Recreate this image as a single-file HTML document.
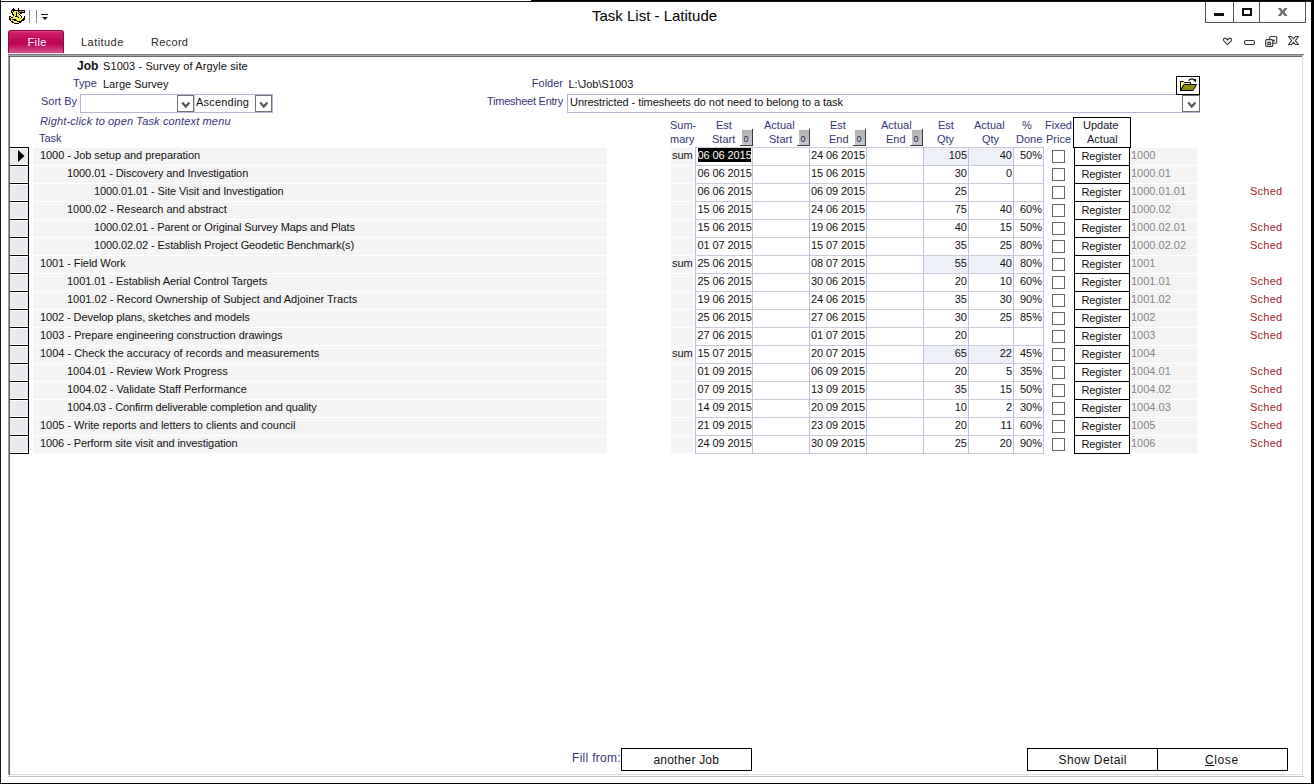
<!DOCTYPE html>
<html><head><meta charset="utf-8"><title>Task List - Latitude</title>
<style>
html,body{margin:0;padding:0;background:#fff;width:1314px;height:784px;overflow:hidden;position:relative}
body *{position:absolute}
body svg *{position:static}
.t,.tb,.ti,.t11,.t12,.t15,.t8{font-family:"Liberation Sans",sans-serif;white-space:nowrap;color:#111}
.t{font-size:11px;line-height:11px}
.tb{font-size:11px;line-height:11px;font-weight:bold}
.ti{font-size:11px;line-height:11px;font-style:italic}
.t11{font-size:11px;line-height:11px}
.t12{font-size:12px;line-height:12px}
.t15{font-size:15px;line-height:15px;color:#000}
.t8{font-size:9px;line-height:9px;color:#24245a}
.c{text-align:center}
u{position:static}
</style></head><body>
<div style="left:531px;top:0px;width:783px;height:1px;background:#000"></div>
<div style="left:0px;top:1px;width:1314px;height:1px;background:#111"></div>
<div style="left:0px;top:0px;width:1px;height:784px;background:#1a1a1a"></div>
<div style="left:1311px;top:0px;width:3px;height:784px;background:#000"></div>
<div style="left:0px;top:783px;width:1314px;height:1px;background:#000"></div>
<svg style="left:9px;top:8px" width="16" height="16" viewBox="0 0 16 16" shape-rendering="crispEdges"><rect x="4" y="0" width="1" height="1" fill="#000"/><rect x="9" y="0" width="1" height="1" fill="#000"/><rect x="3" y="1" width="1" height="1" fill="#000"/><rect x="4" y="1" width="1" height="1" fill="#000"/><rect x="5" y="1" width="1" height="1" fill="#000"/><rect x="8" y="1" width="1" height="1" fill="#eeee50"/><rect x="9" y="1" width="1" height="1" fill="#000"/><rect x="2" y="2" width="1" height="1" fill="#000"/><rect x="3" y="2" width="1" height="1" fill="#000"/><rect x="4" y="2" width="1" height="1" fill="#000"/><rect x="5" y="2" width="1" height="1" fill="#000"/><rect x="6" y="2" width="1" height="1" fill="#000"/><rect x="7" y="2" width="1" height="1" fill="#000"/><rect x="8" y="2" width="1" height="1" fill="#000"/><rect x="9" y="2" width="1" height="1" fill="#000"/><rect x="10" y="2" width="1" height="1" fill="#000"/><rect x="11" y="2" width="1" height="1" fill="#000"/><rect x="12" y="2" width="1" height="1" fill="#000"/><rect x="13" y="2" width="1" height="1" fill="#000"/><rect x="14" y="2" width="1" height="1" fill="#000"/><rect x="15" y="2" width="1" height="1" fill="#000"/><rect x="2" y="3" width="1" height="1" fill="#000"/><rect x="4" y="3" width="1" height="1" fill="#000"/><rect x="6" y="3" width="1" height="1" fill="#eeee50"/><rect x="7" y="3" width="1" height="1" fill="#eeee50"/><rect x="8" y="3" width="1" height="1" fill="#eeee50"/><rect x="9" y="3" width="1" height="1" fill="#000"/><rect x="10" y="3" width="1" height="1" fill="#a0a080"/><rect x="11" y="3" width="1" height="1" fill="#a0a080"/><rect x="12" y="3" width="1" height="1" fill="#a0a080"/><rect x="13" y="3" width="1" height="1" fill="#a0a080"/><rect x="14" y="3" width="1" height="1" fill="#a0a080"/><rect x="15" y="3" width="1" height="1" fill="#000"/><rect x="2" y="4" width="1" height="1" fill="#000"/><rect x="3" y="4" width="1" height="1" fill="#000"/><rect x="4" y="4" width="1" height="1" fill="#eeee50"/><rect x="5" y="4" width="1" height="1" fill="#eeee50"/><rect x="6" y="4" width="1" height="1" fill="#eeee50"/><rect x="7" y="4" width="1" height="1" fill="#000"/><rect x="8" y="4" width="1" height="1" fill="#eeee50"/><rect x="9" y="4" width="1" height="1" fill="#eeee50"/><rect x="10" y="4" width="1" height="1" fill="#000"/><rect x="11" y="4" width="1" height="1" fill="#000"/><rect x="12" y="4" width="1" height="1" fill="#000"/><rect x="13" y="4" width="1" height="1" fill="#000"/><rect x="14" y="4" width="1" height="1" fill="#000"/><rect x="15" y="4" width="1" height="1" fill="#000"/><rect x="3" y="5" width="1" height="1" fill="#000"/><rect x="4" y="5" width="1" height="1" fill="#eeee50"/><rect x="5" y="5" width="1" height="1" fill="#eeee50"/><rect x="6" y="5" width="1" height="1" fill="#eeee50"/><rect x="7" y="5" width="1" height="1" fill="#000"/><rect x="8" y="5" width="1" height="1" fill="#eeee50"/><rect x="9" y="5" width="1" height="1" fill="#000"/><rect x="10" y="5" width="1" height="1" fill="#eeee50"/><rect x="11" y="5" width="1" height="1" fill="#000"/><rect x="12" y="5" width="1" height="1" fill="#000"/><rect x="3" y="6" width="1" height="1" fill="#000"/><rect x="4" y="6" width="1" height="1" fill="#000"/><rect x="5" y="6" width="1" height="1" fill="#eeee50"/><rect x="6" y="6" width="1" height="1" fill="#eeee50"/><rect x="7" y="6" width="1" height="1" fill="#000"/><rect x="8" y="6" width="1" height="1" fill="#eeee50"/><rect x="9" y="6" width="1" height="1" fill="#eeee50"/><rect x="10" y="6" width="1" height="1" fill="#000"/><rect x="11" y="6" width="1" height="1" fill="#eeee50"/><rect x="4" y="7" width="1" height="1" fill="#000"/><rect x="5" y="7" width="1" height="1" fill="#eeee50"/><rect x="6" y="7" width="1" height="1" fill="#eeee50"/><rect x="7" y="7" width="1" height="1" fill="#000"/><rect x="8" y="7" width="1" height="1" fill="#eeee50"/><rect x="9" y="7" width="1" height="1" fill="#eeee50"/><rect x="10" y="7" width="1" height="1" fill="#eeee50"/><rect x="11" y="7" width="1" height="1" fill="#000"/><rect x="0" y="8" width="1" height="1" fill="#000"/><rect x="1" y="8" width="1" height="1" fill="#000"/><rect x="4" y="8" width="1" height="1" fill="#eeee50"/><rect x="5" y="8" width="1" height="1" fill="#eeee50"/><rect x="6" y="8" width="1" height="1" fill="#000"/><rect x="7" y="8" width="1" height="1" fill="#000"/><rect x="8" y="8" width="1" height="1" fill="#000"/><rect x="9" y="8" width="1" height="1" fill="#eeee50"/><rect x="10" y="8" width="1" height="1" fill="#eeee50"/><rect x="11" y="8" width="1" height="1" fill="#eeee50"/><rect x="12" y="8" width="1" height="1" fill="#000"/><rect x="15" y="8" width="1" height="1" fill="#000"/><rect x="0" y="9" width="1" height="1" fill="#000"/><rect x="2" y="9" width="1" height="1" fill="#000"/><rect x="3" y="9" width="1" height="1" fill="#000"/><rect x="4" y="9" width="1" height="1" fill="#eeee50"/><rect x="5" y="9" width="1" height="1" fill="#eeee50"/><rect x="6" y="9" width="1" height="1" fill="#eeee50"/><rect x="7" y="9" width="1" height="1" fill="#eeee50"/><rect x="8" y="9" width="1" height="1" fill="#eeee50"/><rect x="9" y="9" width="1" height="1" fill="#000"/><rect x="10" y="9" width="1" height="1" fill="#eeee50"/><rect x="11" y="9" width="1" height="1" fill="#eeee50"/><rect x="12" y="9" width="1" height="1" fill="#000"/><rect x="15" y="9" width="1" height="1" fill="#000"/><rect x="0" y="10" width="1" height="1" fill="#000"/><rect x="1" y="10" width="1" height="1" fill="#000"/><rect x="2" y="10" width="1" height="1" fill="#eeee50"/><rect x="3" y="10" width="1" height="1" fill="#eeee50"/><rect x="4" y="10" width="1" height="1" fill="#eeee50"/><rect x="5" y="10" width="1" height="1" fill="#eeee50"/><rect x="6" y="10" width="1" height="1" fill="#eeee50"/><rect x="7" y="10" width="1" height="1" fill="#eeee50"/><rect x="8" y="10" width="1" height="1" fill="#eeee50"/><rect x="9" y="10" width="1" height="1" fill="#eeee50"/><rect x="10" y="10" width="1" height="1" fill="#eeee50"/><rect x="11" y="10" width="1" height="1" fill="#eeee50"/><rect x="12" y="10" width="1" height="1" fill="#eeee50"/><rect x="13" y="10" width="1" height="1" fill="#eeee50"/><rect x="14" y="10" width="1" height="1" fill="#000"/><rect x="15" y="10" width="1" height="1" fill="#000"/><rect x="0" y="11" width="1" height="1" fill="#000"/><rect x="1" y="11" width="1" height="1" fill="#000"/><rect x="2" y="11" width="1" height="1" fill="#eeee50"/><rect x="3" y="11" width="1" height="1" fill="#000"/><rect x="4" y="11" width="1" height="1" fill="#000"/><rect x="5" y="11" width="1" height="1" fill="#000"/><rect x="6" y="11" width="1" height="1" fill="#000"/><rect x="7" y="11" width="1" height="1" fill="#eeee50"/><rect x="8" y="11" width="1" height="1" fill="#eeee50"/><rect x="9" y="11" width="1" height="1" fill="#eeee50"/><rect x="10" y="11" width="1" height="1" fill="#eeee50"/><rect x="11" y="11" width="1" height="1" fill="#eeee50"/><rect x="12" y="11" width="1" height="1" fill="#eeee50"/><rect x="13" y="11" width="1" height="1" fill="#000"/><rect x="14" y="11" width="1" height="1" fill="#000"/><rect x="15" y="11" width="1" height="1" fill="#000"/><rect x="1" y="12" width="1" height="1" fill="#000"/><rect x="2" y="12" width="1" height="1" fill="#eeee50"/><rect x="3" y="12" width="1" height="1" fill="#eeee50"/><rect x="4" y="12" width="1" height="1" fill="#eeee50"/><rect x="5" y="12" width="1" height="1" fill="#000"/><rect x="6" y="12" width="1" height="1" fill="#000"/><rect x="7" y="12" width="1" height="1" fill="#000"/><rect x="8" y="12" width="1" height="1" fill="#eeee50"/><rect x="9" y="12" width="1" height="1" fill="#eeee50"/><rect x="10" y="12" width="1" height="1" fill="#eeee50"/><rect x="11" y="12" width="1" height="1" fill="#eeee50"/><rect x="12" y="12" width="1" height="1" fill="#000"/><rect x="13" y="12" width="1" height="1" fill="#000"/><rect x="14" y="12" width="1" height="1" fill="#000"/><rect x="2" y="13" width="1" height="1" fill="#000"/><rect x="3" y="13" width="1" height="1" fill="#000"/><rect x="4" y="13" width="1" height="1" fill="#eeee50"/><rect x="5" y="13" width="1" height="1" fill="#eeee50"/><rect x="6" y="13" width="1" height="1" fill="#eeee50"/><rect x="7" y="13" width="1" height="1" fill="#eeee50"/><rect x="8" y="13" width="1" height="1" fill="#000"/><rect x="9" y="13" width="1" height="1" fill="#000"/><rect x="10" y="13" width="1" height="1" fill="#000"/><rect x="11" y="13" width="1" height="1" fill="#000"/><rect x="12" y="13" width="1" height="1" fill="#000"/><rect x="3" y="14" width="1" height="1" fill="#000"/><rect x="4" y="14" width="1" height="1" fill="#000"/><rect x="5" y="14" width="1" height="1" fill="#eeee50"/><rect x="6" y="14" width="1" height="1" fill="#eeee50"/><rect x="7" y="14" width="1" height="1" fill="#eeee50"/><rect x="8" y="14" width="1" height="1" fill="#eeee50"/><rect x="9" y="14" width="1" height="1" fill="#eeee50"/><rect x="10" y="14" width="1" height="1" fill="#000"/><rect x="11" y="14" width="1" height="1" fill="#000"/><rect x="5" y="15" width="1" height="1" fill="#000"/><rect x="6" y="15" width="1" height="1" fill="#000"/><rect x="7" y="15" width="1" height="1" fill="#000"/><rect x="8" y="15" width="1" height="1" fill="#000"/><rect x="9" y="15" width="1" height="1" fill="#000"/></svg>
<div style="left:29px;top:10px;width:1px;height:13px;background:#8c8c8c"></div>
<div style="left:36px;top:10px;width:1px;height:13px;background:#8c8c8c"></div>
<div style="left:41px;top:14px;width:7px;height:1px;background:#111"></div>
<svg style="left:42px;top:17px" width="6" height="3" viewBox="0 0 6 3"><path d="M0 0h6L3 3z" fill="#111"/></svg>
<span class="t15" style="left:592px;top:8px;">Task List - Latitude</span>
<div style="left:1205px;top:2px;width:101px;height:21px;border:1px solid #555;border-top:0;box-sizing:border-box"></div>
<div style="left:1233px;top:2px;width:1px;height:21px;background:#555"></div>
<div style="left:1259px;top:2px;width:1px;height:21px;background:#555"></div>
<div style="left:1214px;top:13px;width:10px;height:3px;background:#111"></div>
<div style="left:1242px;top:8px;width:10px;height:8px;border:2px solid #111;box-sizing:border-box"></div>
<svg style="left:1274px;top:4px" width="18" height="16" viewBox="1274 4 18 16"><path d="M1277.8 8H1281L1282.7 10.6L1284.4 8H1287.6L1284.5 12L1287.6 16H1284.4L1282.7 13.4L1281 16H1277.8L1280.9 12Z" fill="#6e6e6e"/></svg>
<div style="left:8px;top:30px;width:56px;height:23px;box-sizing:border-box;border:1px solid #8a0a40;border-bottom:0;border-radius:3px 3px 0 0;background:linear-gradient(#e04282 0px,#d01c66 2px,#c0085a 9px,#bc0658 13px,#d03a78 19px,#e0508c 22px)"></div>
<div style="left:8px;top:53px;width:56px;height:1px;background:#fbe2f0"></div>
<span class="t11" style="left:27.5px;top:37px;color:#fff;letter-spacing:0.4px">File</span>
<span class="t11" style="left:81px;top:37px;color:#2a2a2a;letter-spacing:0.45px">Latitude</span>
<span class="t11" style="left:151px;top:37px;color:#2a2a2a;letter-spacing:0.3px">Record</span>
<svg style="left:1220px;top:33px" width="82" height="16" viewBox="1220 33 82 16" fill="none" stroke="#383838" stroke-width="1.1" stroke-linejoin="round">
<path d="M1227.5 44.6L1223.8 40.8Q1222.9 39.6 1223.8 38.6Q1224.9 37.6 1226 38.5L1227.5 40L1229 38.5Q1230.1 37.6 1231.2 38.6Q1232.1 39.6 1231.2 40.8Z"/>
<rect x="1244.5" y="40.5" width="10" height="4" rx="1.5"/>
<rect x="1269.7" y="36.5" width="7" height="6.8" rx="1"/>
<rect x="1265.7" y="39.6" width="7" height="6.8" rx="1" fill="#fff"/>
<rect x="1267.8" y="42.4" width="2.8" height="2" fill="none"/>
<rect x="1273.3" y="40" width="1.2" height="1.2" fill="none" stroke-width="0.9"/>
<path d="M1288.5 36.5H1291.5L1293.5 38.8L1295.5 36.5H1298.5L1295.4 40.6L1298.5 44.5H1295.5L1293.5 42.3L1291.5 44.5H1288.5L1291.6 40.6Z"/>
</svg>
<div style="left:8px;top:54px;width:1296px;height:1px;background:#808080"></div>
<div style="left:8px;top:55px;width:1295px;height:1px;background:#a4a4a4"></div>
<div style="left:8px;top:56px;width:1294px;height:1px;background:#6a6a6a"></div>
<div style="left:8px;top:57px;width:1px;height:718px;background:#9c9c9c"></div>
<div style="left:9px;top:57px;width:1px;height:718px;background:#626262"></div>
<div style="left:1302px;top:57px;width:1px;height:718px;background:#d8d8d8"></div>
<div style="left:10px;top:774px;width:1292px;height:1px;background:#dedede"></div>
<div style="left:8px;top:776px;width:1296px;height:1px;background:#c8c8c8"></div>
<span class="tb" style="left:77px;top:60px;font-size:12px;line-height:12px">Job</span>
<span class="t" style="left:103px;top:61px;letter-spacing:0.1px">S1003 - Survey of Argyle site</span>
<span class="t" style="left:73px;top:78px;color:#363676;">Type</span>
<span class="t" style="left:103px;top:79px;">Large Survey</span>
<span class="t" style="left:41px;top:96px;color:#363676;">Sort By</span>
<div style="left:80px;top:94px;width:193px;height:19px;border:1px solid #b4b4d8;box-sizing:border-box;background:#fff"></div>
<div style="left:177px;top:95px;width:17px;height:17px;border:1px solid #707070;box-sizing:border-box;background:#fff"></div>
<div style="left:255px;top:95px;width:17px;height:17px;border:1px solid #707070;box-sizing:border-box;background:#fff"></div>
<div style="left:194px;top:94px;width:1px;height:19px;background:#c8c8e0"></div>
<span class="t" style="left:196px;top:97px;letter-spacing:0.2px">Ascending</span>
<svg style="left:181px;top:101px" width="10" height="8" viewBox="0 0 10 8"><path d="M1.2 1.6L4.8 5.6L8.4 1.6" stroke="#555" stroke-width="2.2" fill="none"/></svg>
<svg style="left:259px;top:101px" width="10" height="8" viewBox="0 0 10 8"><path d="M1.2 1.6L4.8 5.6L8.4 1.6" stroke="#555" stroke-width="2.2" fill="none"/></svg>
<span class="ti" style="left:40px;top:116px;color:#363676;letter-spacing:0.14px">Right-click to open Task context menu</span>
<span class="t" style="left:39px;top:133px;color:#363676;">Task</span>
<span class="t r" style="right:751px;top:78px;color:#363676;">Folder</span>
<span class="t" style="left:568.5px;top:79px;">L:\Job\S1003</span>
<span class="t r" style="right:751px;top:96px;color:#363676;letter-spacing:-0.25px">Timesheet Entry</span>
<div style="left:567px;top:94px;width:633px;height:19px;border:1px solid #b4b4d8;box-sizing:border-box;background:#fff"></div>
<span class="t" style="left:570px;top:97px;letter-spacing:-0.06px">Unrestricted - timesheets do not need to belong to a task</span>
<div style="left:1182px;top:95px;width:18px;height:17px;border:1px solid #707070;box-sizing:border-box;background:#fff"></div>
<svg style="left:1187px;top:101px" width="10" height="8" viewBox="0 0 10 8"><path d="M1.2 1.6L4.8 5.6L8.4 1.6" stroke="#555" stroke-width="2.2" fill="none"/></svg>
<div style="left:1176px;top:76px;width:24px;height:19px;border:1px solid #000;border-width:1.5px;box-sizing:border-box;background:#fff"></div>
<svg style="left:1176px;top:75px" width="24" height="19" viewBox="0 0 24 19">
<path d="M4.5 15.5V6.5H7.5L8.5 7.5H14.5V9.5H8L4.5 15.5Z" fill="#f0f078" stroke="#000" stroke-width="1"/>
<path d="M4.5 15.5L8 9.5H20.5L17 15.5Z" fill="#8c8c0a" stroke="#000" stroke-width="1"/>
<path d="M12.5 5.6Q15.5 2.4 18.6 5" stroke="#000" fill="none" stroke-width="1.1"/>
<path d="M17 4.6L20.3 4L19.6 7.4Z" fill="#000"/>
</svg>
<span class="t" style="left:670px;top:120px;color:#363676;">Sum-</span>
<span class="t" style="left:670px;top:134px;color:#363676;">mary</span>
<span class="t" style="left:716px;top:120px;color:#363676;">Est</span>
<span class="t" style="left:712px;top:134px;color:#363676;">Start</span>
<span class="t" style="left:764px;top:120px;color:#363676;">Actual</span>
<span class="t" style="left:769px;top:134px;color:#363676;">Start</span>
<span class="t" style="left:830px;top:120px;color:#363676;">Est</span>
<span class="t" style="left:829px;top:134px;color:#363676;">End</span>
<span class="t" style="left:881px;top:120px;color:#363676;">Actual</span>
<span class="t" style="left:886px;top:134px;color:#363676;">End</span>
<span class="t" style="left:938px;top:120px;color:#363676;">Est</span>
<span class="t" style="left:937px;top:134px;color:#363676;">Qty</span>
<span class="t" style="left:974px;top:120px;color:#363676;">Actual</span>
<span class="t" style="left:982px;top:134px;color:#363676;">Qty</span>
<span class="t" style="left:1022px;top:120px;color:#363676;">%</span>
<span class="t" style="left:1016px;top:134px;color:#363676;">Done</span>
<span class="t" style="left:1045px;top:120px;color:#363676;">Fixed</span>
<span class="t" style="left:1046px;top:134px;color:#363676;">Price</span>
<div style="left:740px;top:129px;width:13px;height:17px;background:#3c3c3c"></div>
<div style="left:740px;top:129px;width:12px;height:16px;background:#fff"></div>
<div style="left:742px;top:130px;width:10px;height:15px;background:linear-gradient(#b4b4b8,#c6c6ca)"></div>
<span class="t8" style="left:743.5px;top:134.5px;">0</span>
<div style="left:797px;top:129px;width:13px;height:17px;background:#3c3c3c"></div>
<div style="left:797px;top:129px;width:12px;height:16px;background:#fff"></div>
<div style="left:799px;top:130px;width:10px;height:15px;background:linear-gradient(#b4b4b8,#c6c6ca)"></div>
<span class="t8" style="left:800.5px;top:134.5px;">0</span>
<div style="left:853px;top:129px;width:13px;height:17px;background:#3c3c3c"></div>
<div style="left:853px;top:129px;width:12px;height:16px;background:#fff"></div>
<div style="left:855px;top:130px;width:10px;height:15px;background:linear-gradient(#b4b4b8,#c6c6ca)"></div>
<span class="t8" style="left:856.5px;top:134.5px;">0</span>
<div style="left:910px;top:129px;width:13px;height:17px;background:#3c3c3c"></div>
<div style="left:910px;top:129px;width:12px;height:16px;background:#fff"></div>
<div style="left:912px;top:130px;width:10px;height:15px;background:linear-gradient(#b4b4b8,#c6c6ca)"></div>
<span class="t8" style="left:913.5px;top:134.5px;">0</span>
<div style="left:1073px;top:117px;width:58px;height:31px;border:1px solid #000;box-sizing:border-box;background:#fff"></div>
<span class="t" style="left:1083px;top:120px;color:#161628">Update</span>
<span class="t" style="left:1087px;top:134px;color:#161628">Actual</span>
<div style="left:10px;top:147px;width:19px;height:19px;border:1px solid #000;border-left:0;box-sizing:border-box;background:#e8eaee;box-shadow:inset 0 1px #fff,inset 0 -1px #fff"></div>
<div style="left:33px;top:148px;width:574px;height:17px;background:#f4f4f4"></div>
<span class="t" style="left:40px;top:150px;letter-spacing:-0.061px">1000 - Job setup and preparation</span>
<div style="left:671px;top:148px;width:22px;height:17px;background:#f4f4f4"></div>
<span class="t" style="left:672px;top:150px;">sum</span>
<div style="left:924px;top:148px;width:44px;height:17px;background:#edf0f6"></div>
<div style="left:969px;top:148px;width:44px;height:17px;background:#edf0f6"></div>
<div style="left:698px;top:148px;width:53px;height:14px;background:#000"></div>
<span class="t" style="left:697.6px;top:150px;color:#fff;letter-spacing:-0.1px">06 06 2015</span>
<span class="t" style="left:811px;top:150px;letter-spacing:-0.1px">24 06 2015</span>
<span class="t r" style="right:347px;top:150px;">105</span>
<span class="t r" style="right:302px;top:150px;">40</span>
<span class="t r" style="right:272px;top:150px;">50%</span>
<div style="left:1052px;top:150px;width:13px;height:13px;border:1px solid #666;box-sizing:border-box;background:#fff"></div>
<div style="left:1074px;top:147px;width:56px;height:19px;border:1px solid #000;box-sizing:border-box;background:#fff"></div>
<span class="t" style="left:1081.5px;top:151px;letter-spacing:-0.12px">Register</span>
<div style="left:1130px;top:148px;width:67px;height:17px;background:#f4f4f4"></div>
<span class="t" style="left:1131px;top:150px;color:#858585">1000</span>
<div style="left:10px;top:165px;width:19px;height:19px;border:1px solid #000;border-left:0;box-sizing:border-box;background:#e8eaee;box-shadow:inset 0 1px #fff,inset 0 -1px #fff"></div>
<div style="left:33px;top:166px;width:574px;height:17px;background:#f4f4f4"></div>
<span class="t" style="left:67px;top:168px;letter-spacing:-0.078px">1000.01 - Discovery and Investigation</span>
<div style="left:671px;top:166px;width:22px;height:17px;background:#f4f4f4"></div>
<span class="t" style="left:697.6px;top:168px;letter-spacing:-0.1px">06 06 2015</span>
<span class="t" style="left:811px;top:168px;letter-spacing:-0.1px">15 06 2015</span>
<span class="t r" style="right:347px;top:168px;">30</span>
<span class="t r" style="right:302px;top:168px;">0</span>
<div style="left:1052px;top:168px;width:13px;height:13px;border:1px solid #666;box-sizing:border-box;background:#fff"></div>
<div style="left:1074px;top:165px;width:56px;height:19px;border:1px solid #000;box-sizing:border-box;background:#fff"></div>
<span class="t" style="left:1081.5px;top:169px;letter-spacing:-0.12px">Register</span>
<div style="left:1130px;top:166px;width:67px;height:17px;background:#f4f4f4"></div>
<span class="t" style="left:1131px;top:168px;color:#858585">1000.01</span>
<div style="left:10px;top:183px;width:19px;height:19px;border:1px solid #000;border-left:0;box-sizing:border-box;background:#e8eaee;box-shadow:inset 0 1px #fff,inset 0 -1px #fff"></div>
<div style="left:33px;top:184px;width:574px;height:17px;background:#f4f4f4"></div>
<span class="t" style="left:94px;top:186px;letter-spacing:-0.098px">1000.01.01 - Site Visit and Investigation</span>
<div style="left:671px;top:184px;width:22px;height:17px;background:#f4f4f4"></div>
<span class="t" style="left:697.6px;top:186px;letter-spacing:-0.1px">06 06 2015</span>
<span class="t" style="left:811px;top:186px;letter-spacing:-0.1px">06 09 2015</span>
<span class="t r" style="right:347px;top:186px;">25</span>
<div style="left:1052px;top:186px;width:13px;height:13px;border:1px solid #666;box-sizing:border-box;background:#fff"></div>
<div style="left:1074px;top:183px;width:56px;height:19px;border:1px solid #000;box-sizing:border-box;background:#fff"></div>
<span class="t" style="left:1081.5px;top:187px;letter-spacing:-0.12px">Register</span>
<div style="left:1130px;top:184px;width:67px;height:17px;background:#f4f4f4"></div>
<span class="t" style="left:1131px;top:186px;color:#858585">1000.01.01</span>
<span class="t" style="left:1250px;top:186px;color:#a8242e;letter-spacing:0.25px">Sched</span>
<div style="left:10px;top:201px;width:19px;height:19px;border:1px solid #000;border-left:0;box-sizing:border-box;background:#e8eaee;box-shadow:inset 0 1px #fff,inset 0 -1px #fff"></div>
<div style="left:33px;top:202px;width:574px;height:17px;background:#f4f4f4"></div>
<span class="t" style="left:67px;top:204px;letter-spacing:-0.013px">1000.02 - Research and abstract</span>
<div style="left:671px;top:202px;width:22px;height:17px;background:#f4f4f4"></div>
<span class="t" style="left:697.6px;top:204px;letter-spacing:-0.1px">15 06 2015</span>
<span class="t" style="left:811px;top:204px;letter-spacing:-0.1px">24 06 2015</span>
<span class="t r" style="right:347px;top:204px;">75</span>
<span class="t r" style="right:302px;top:204px;">40</span>
<span class="t r" style="right:272px;top:204px;">60%</span>
<div style="left:1052px;top:204px;width:13px;height:13px;border:1px solid #666;box-sizing:border-box;background:#fff"></div>
<div style="left:1074px;top:201px;width:56px;height:19px;border:1px solid #000;box-sizing:border-box;background:#fff"></div>
<span class="t" style="left:1081.5px;top:205px;letter-spacing:-0.12px">Register</span>
<div style="left:1130px;top:202px;width:67px;height:17px;background:#f4f4f4"></div>
<span class="t" style="left:1131px;top:204px;color:#858585">1000.02</span>
<div style="left:10px;top:219px;width:19px;height:19px;border:1px solid #000;border-left:0;box-sizing:border-box;background:#e8eaee;box-shadow:inset 0 1px #fff,inset 0 -1px #fff"></div>
<div style="left:33px;top:220px;width:574px;height:17px;background:#f4f4f4"></div>
<span class="t" style="left:94px;top:222px;letter-spacing:-0.121px">1000.02.01 - Parent or Original Survey Maps and Plats</span>
<div style="left:671px;top:220px;width:22px;height:17px;background:#f4f4f4"></div>
<span class="t" style="left:697.6px;top:222px;letter-spacing:-0.1px">15 06 2015</span>
<span class="t" style="left:811px;top:222px;letter-spacing:-0.1px">19 06 2015</span>
<span class="t r" style="right:347px;top:222px;">40</span>
<span class="t r" style="right:302px;top:222px;">15</span>
<span class="t r" style="right:272px;top:222px;">50%</span>
<div style="left:1052px;top:222px;width:13px;height:13px;border:1px solid #666;box-sizing:border-box;background:#fff"></div>
<div style="left:1074px;top:219px;width:56px;height:19px;border:1px solid #000;box-sizing:border-box;background:#fff"></div>
<span class="t" style="left:1081.5px;top:223px;letter-spacing:-0.12px">Register</span>
<div style="left:1130px;top:220px;width:67px;height:17px;background:#f4f4f4"></div>
<span class="t" style="left:1131px;top:222px;color:#858585">1000.02.01</span>
<span class="t" style="left:1250px;top:222px;color:#a8242e;letter-spacing:0.25px">Sched</span>
<div style="left:10px;top:237px;width:19px;height:19px;border:1px solid #000;border-left:0;box-sizing:border-box;background:#e8eaee;box-shadow:inset 0 1px #fff,inset 0 -1px #fff"></div>
<div style="left:33px;top:238px;width:574px;height:17px;background:#f4f4f4"></div>
<span class="t" style="left:94px;top:240px;letter-spacing:-0.102px">1000.02.02 - Establish Project Geodetic Benchmark(s)</span>
<div style="left:671px;top:238px;width:22px;height:17px;background:#f4f4f4"></div>
<span class="t" style="left:697.6px;top:240px;letter-spacing:-0.1px">01 07 2015</span>
<span class="t" style="left:811px;top:240px;letter-spacing:-0.1px">15 07 2015</span>
<span class="t r" style="right:347px;top:240px;">35</span>
<span class="t r" style="right:302px;top:240px;">25</span>
<span class="t r" style="right:272px;top:240px;">80%</span>
<div style="left:1052px;top:240px;width:13px;height:13px;border:1px solid #666;box-sizing:border-box;background:#fff"></div>
<div style="left:1074px;top:237px;width:56px;height:19px;border:1px solid #000;box-sizing:border-box;background:#fff"></div>
<span class="t" style="left:1081.5px;top:241px;letter-spacing:-0.12px">Register</span>
<div style="left:1130px;top:238px;width:67px;height:17px;background:#f4f4f4"></div>
<span class="t" style="left:1131px;top:240px;color:#858585">1000.02.02</span>
<span class="t" style="left:1250px;top:240px;color:#a8242e;letter-spacing:0.25px">Sched</span>
<div style="left:10px;top:255px;width:19px;height:19px;border:1px solid #000;border-left:0;box-sizing:border-box;background:#e8eaee;box-shadow:inset 0 1px #fff,inset 0 -1px #fff"></div>
<div style="left:33px;top:256px;width:574px;height:17px;background:#f4f4f4"></div>
<span class="t" style="left:40px;top:258px;letter-spacing:-0.06px">1001 - Field Work</span>
<div style="left:671px;top:256px;width:22px;height:17px;background:#f4f4f4"></div>
<span class="t" style="left:672px;top:258px;">sum</span>
<div style="left:924px;top:256px;width:44px;height:17px;background:#edf0f6"></div>
<div style="left:969px;top:256px;width:44px;height:17px;background:#edf0f6"></div>
<span class="t" style="left:697.6px;top:258px;letter-spacing:-0.1px">25 06 2015</span>
<span class="t" style="left:811px;top:258px;letter-spacing:-0.1px">08 07 2015</span>
<span class="t r" style="right:347px;top:258px;">55</span>
<span class="t r" style="right:302px;top:258px;">40</span>
<span class="t r" style="right:272px;top:258px;">80%</span>
<div style="left:1052px;top:258px;width:13px;height:13px;border:1px solid #666;box-sizing:border-box;background:#fff"></div>
<div style="left:1074px;top:255px;width:56px;height:19px;border:1px solid #000;box-sizing:border-box;background:#fff"></div>
<span class="t" style="left:1081.5px;top:259px;letter-spacing:-0.12px">Register</span>
<div style="left:1130px;top:256px;width:67px;height:17px;background:#f4f4f4"></div>
<span class="t" style="left:1131px;top:258px;color:#858585">1001</span>
<div style="left:10px;top:273px;width:19px;height:19px;border:1px solid #000;border-left:0;box-sizing:border-box;background:#e8eaee;box-shadow:inset 0 1px #fff,inset 0 -1px #fff"></div>
<div style="left:33px;top:274px;width:574px;height:17px;background:#f4f4f4"></div>
<span class="t" style="left:67px;top:276px;letter-spacing:-0.049px">1001.01 - Establish Aerial Control Targets</span>
<div style="left:671px;top:274px;width:22px;height:17px;background:#f4f4f4"></div>
<span class="t" style="left:697.6px;top:276px;letter-spacing:-0.1px">25 06 2015</span>
<span class="t" style="left:811px;top:276px;letter-spacing:-0.1px">30 06 2015</span>
<span class="t r" style="right:347px;top:276px;">20</span>
<span class="t r" style="right:302px;top:276px;">10</span>
<span class="t r" style="right:272px;top:276px;">60%</span>
<div style="left:1052px;top:276px;width:13px;height:13px;border:1px solid #666;box-sizing:border-box;background:#fff"></div>
<div style="left:1074px;top:273px;width:56px;height:19px;border:1px solid #000;box-sizing:border-box;background:#fff"></div>
<span class="t" style="left:1081.5px;top:277px;letter-spacing:-0.12px">Register</span>
<div style="left:1130px;top:274px;width:67px;height:17px;background:#f4f4f4"></div>
<span class="t" style="left:1131px;top:276px;color:#858585">1001.01</span>
<span class="t" style="left:1250px;top:276px;color:#a8242e;letter-spacing:0.25px">Sched</span>
<div style="left:10px;top:291px;width:19px;height:19px;border:1px solid #000;border-left:0;box-sizing:border-box;background:#e8eaee;box-shadow:inset 0 1px #fff,inset 0 -1px #fff"></div>
<div style="left:33px;top:292px;width:574px;height:17px;background:#f4f4f4"></div>
<span class="t" style="left:67px;top:294px;letter-spacing:0.007px">1001.02 - Record Ownership of Subject and Adjoiner Tracts</span>
<div style="left:671px;top:292px;width:22px;height:17px;background:#f4f4f4"></div>
<span class="t" style="left:697.6px;top:294px;letter-spacing:-0.1px">19 06 2015</span>
<span class="t" style="left:811px;top:294px;letter-spacing:-0.1px">24 06 2015</span>
<span class="t r" style="right:347px;top:294px;">35</span>
<span class="t r" style="right:302px;top:294px;">30</span>
<span class="t r" style="right:272px;top:294px;">90%</span>
<div style="left:1052px;top:294px;width:13px;height:13px;border:1px solid #666;box-sizing:border-box;background:#fff"></div>
<div style="left:1074px;top:291px;width:56px;height:19px;border:1px solid #000;box-sizing:border-box;background:#fff"></div>
<span class="t" style="left:1081.5px;top:295px;letter-spacing:-0.12px">Register</span>
<div style="left:1130px;top:292px;width:67px;height:17px;background:#f4f4f4"></div>
<span class="t" style="left:1131px;top:294px;color:#858585">1001.02</span>
<span class="t" style="left:1250px;top:294px;color:#a8242e;letter-spacing:0.25px">Sched</span>
<div style="left:10px;top:309px;width:19px;height:19px;border:1px solid #000;border-left:0;box-sizing:border-box;background:#e8eaee;box-shadow:inset 0 1px #fff,inset 0 -1px #fff"></div>
<div style="left:33px;top:310px;width:574px;height:17px;background:#f4f4f4"></div>
<span class="t" style="left:40px;top:312px;letter-spacing:-0.09px">1002 - Develop plans, sketches and models</span>
<div style="left:671px;top:310px;width:22px;height:17px;background:#f4f4f4"></div>
<span class="t" style="left:697.6px;top:312px;letter-spacing:-0.1px">25 06 2015</span>
<span class="t" style="left:811px;top:312px;letter-spacing:-0.1px">27 06 2015</span>
<span class="t r" style="right:347px;top:312px;">30</span>
<span class="t r" style="right:302px;top:312px;">25</span>
<span class="t r" style="right:272px;top:312px;">85%</span>
<div style="left:1052px;top:312px;width:13px;height:13px;border:1px solid #666;box-sizing:border-box;background:#fff"></div>
<div style="left:1074px;top:309px;width:56px;height:19px;border:1px solid #000;box-sizing:border-box;background:#fff"></div>
<span class="t" style="left:1081.5px;top:313px;letter-spacing:-0.12px">Register</span>
<div style="left:1130px;top:310px;width:67px;height:17px;background:#f4f4f4"></div>
<span class="t" style="left:1131px;top:312px;color:#858585">1002</span>
<span class="t" style="left:1250px;top:312px;color:#a8242e;letter-spacing:0.25px">Sched</span>
<div style="left:10px;top:327px;width:19px;height:19px;border:1px solid #000;border-left:0;box-sizing:border-box;background:#e8eaee;box-shadow:inset 0 1px #fff,inset 0 -1px #fff"></div>
<div style="left:33px;top:328px;width:574px;height:17px;background:#f4f4f4"></div>
<span class="t" style="left:40px;top:330px;letter-spacing:-0.017px">1003 - Prepare engineering construction drawings</span>
<div style="left:671px;top:328px;width:22px;height:17px;background:#f4f4f4"></div>
<span class="t" style="left:697.6px;top:330px;letter-spacing:-0.1px">27 06 2015</span>
<span class="t" style="left:811px;top:330px;letter-spacing:-0.1px">01 07 2015</span>
<span class="t r" style="right:347px;top:330px;">20</span>
<div style="left:1052px;top:330px;width:13px;height:13px;border:1px solid #666;box-sizing:border-box;background:#fff"></div>
<div style="left:1074px;top:327px;width:56px;height:19px;border:1px solid #000;box-sizing:border-box;background:#fff"></div>
<span class="t" style="left:1081.5px;top:331px;letter-spacing:-0.12px">Register</span>
<div style="left:1130px;top:328px;width:67px;height:17px;background:#f4f4f4"></div>
<span class="t" style="left:1131px;top:330px;color:#858585">1003</span>
<span class="t" style="left:1250px;top:330px;color:#a8242e;letter-spacing:0.25px">Sched</span>
<div style="left:10px;top:345px;width:19px;height:19px;border:1px solid #000;border-left:0;box-sizing:border-box;background:#e8eaee;box-shadow:inset 0 1px #fff,inset 0 -1px #fff"></div>
<div style="left:33px;top:346px;width:574px;height:17px;background:#f4f4f4"></div>
<span class="t" style="left:40px;top:348px;letter-spacing:-0.015px">1004 - Check the accuracy of records and measurements</span>
<div style="left:671px;top:346px;width:22px;height:17px;background:#f4f4f4"></div>
<span class="t" style="left:672px;top:348px;">sum</span>
<div style="left:924px;top:346px;width:44px;height:17px;background:#edf0f6"></div>
<div style="left:969px;top:346px;width:44px;height:17px;background:#edf0f6"></div>
<span class="t" style="left:697.6px;top:348px;letter-spacing:-0.1px">15 07 2015</span>
<span class="t" style="left:811px;top:348px;letter-spacing:-0.1px">20 07 2015</span>
<span class="t r" style="right:347px;top:348px;">65</span>
<span class="t r" style="right:302px;top:348px;">22</span>
<span class="t r" style="right:272px;top:348px;">45%</span>
<div style="left:1052px;top:348px;width:13px;height:13px;border:1px solid #666;box-sizing:border-box;background:#fff"></div>
<div style="left:1074px;top:345px;width:56px;height:19px;border:1px solid #000;box-sizing:border-box;background:#fff"></div>
<span class="t" style="left:1081.5px;top:349px;letter-spacing:-0.12px">Register</span>
<div style="left:1130px;top:346px;width:67px;height:17px;background:#f4f4f4"></div>
<span class="t" style="left:1131px;top:348px;color:#858585">1004</span>
<div style="left:10px;top:363px;width:19px;height:19px;border:1px solid #000;border-left:0;box-sizing:border-box;background:#e8eaee;box-shadow:inset 0 1px #fff,inset 0 -1px #fff"></div>
<div style="left:33px;top:364px;width:574px;height:17px;background:#f4f4f4"></div>
<span class="t" style="left:67px;top:366px;letter-spacing:-0.014px">1004.01 - Review Work Progress</span>
<div style="left:671px;top:364px;width:22px;height:17px;background:#f4f4f4"></div>
<span class="t" style="left:697.6px;top:366px;letter-spacing:-0.1px">01 09 2015</span>
<span class="t" style="left:811px;top:366px;letter-spacing:-0.1px">06 09 2015</span>
<span class="t r" style="right:347px;top:366px;">20</span>
<span class="t r" style="right:302px;top:366px;">5</span>
<span class="t r" style="right:272px;top:366px;">35%</span>
<div style="left:1052px;top:366px;width:13px;height:13px;border:1px solid #666;box-sizing:border-box;background:#fff"></div>
<div style="left:1074px;top:363px;width:56px;height:19px;border:1px solid #000;box-sizing:border-box;background:#fff"></div>
<span class="t" style="left:1081.5px;top:367px;letter-spacing:-0.12px">Register</span>
<div style="left:1130px;top:364px;width:67px;height:17px;background:#f4f4f4"></div>
<span class="t" style="left:1131px;top:366px;color:#858585">1004.01</span>
<span class="t" style="left:1250px;top:366px;color:#a8242e;letter-spacing:0.25px">Sched</span>
<div style="left:10px;top:381px;width:19px;height:19px;border:1px solid #000;border-left:0;box-sizing:border-box;background:#e8eaee;box-shadow:inset 0 1px #fff,inset 0 -1px #fff"></div>
<div style="left:33px;top:382px;width:574px;height:17px;background:#f4f4f4"></div>
<span class="t" style="left:67px;top:384px;letter-spacing:0.0px">1004.02 - Validate Staff Performance</span>
<div style="left:671px;top:382px;width:22px;height:17px;background:#f4f4f4"></div>
<span class="t" style="left:697.6px;top:384px;letter-spacing:-0.1px">07 09 2015</span>
<span class="t" style="left:811px;top:384px;letter-spacing:-0.1px">13 09 2015</span>
<span class="t r" style="right:347px;top:384px;">35</span>
<span class="t r" style="right:302px;top:384px;">15</span>
<span class="t r" style="right:272px;top:384px;">50%</span>
<div style="left:1052px;top:384px;width:13px;height:13px;border:1px solid #666;box-sizing:border-box;background:#fff"></div>
<div style="left:1074px;top:381px;width:56px;height:19px;border:1px solid #000;box-sizing:border-box;background:#fff"></div>
<span class="t" style="left:1081.5px;top:385px;letter-spacing:-0.12px">Register</span>
<div style="left:1130px;top:382px;width:67px;height:17px;background:#f4f4f4"></div>
<span class="t" style="left:1131px;top:384px;color:#858585">1004.02</span>
<span class="t" style="left:1250px;top:384px;color:#a8242e;letter-spacing:0.25px">Sched</span>
<div style="left:10px;top:399px;width:19px;height:19px;border:1px solid #000;border-left:0;box-sizing:border-box;background:#e8eaee;box-shadow:inset 0 1px #fff,inset 0 -1px #fff"></div>
<div style="left:33px;top:400px;width:574px;height:17px;background:#f4f4f4"></div>
<span class="t" style="left:67px;top:402px;letter-spacing:-0.139px">1004.03 - Confirm deliverable completion and quality</span>
<div style="left:671px;top:400px;width:22px;height:17px;background:#f4f4f4"></div>
<span class="t" style="left:697.6px;top:402px;letter-spacing:-0.1px">14 09 2015</span>
<span class="t" style="left:811px;top:402px;letter-spacing:-0.1px">20 09 2015</span>
<span class="t r" style="right:347px;top:402px;">10</span>
<span class="t r" style="right:302px;top:402px;">2</span>
<span class="t r" style="right:272px;top:402px;">30%</span>
<div style="left:1052px;top:402px;width:13px;height:13px;border:1px solid #666;box-sizing:border-box;background:#fff"></div>
<div style="left:1074px;top:399px;width:56px;height:19px;border:1px solid #000;box-sizing:border-box;background:#fff"></div>
<span class="t" style="left:1081.5px;top:403px;letter-spacing:-0.12px">Register</span>
<div style="left:1130px;top:400px;width:67px;height:17px;background:#f4f4f4"></div>
<span class="t" style="left:1131px;top:402px;color:#858585">1004.03</span>
<span class="t" style="left:1250px;top:402px;color:#a8242e;letter-spacing:0.25px">Sched</span>
<div style="left:10px;top:417px;width:19px;height:19px;border:1px solid #000;border-left:0;box-sizing:border-box;background:#e8eaee;box-shadow:inset 0 1px #fff,inset 0 -1px #fff"></div>
<div style="left:33px;top:418px;width:574px;height:17px;background:#f4f4f4"></div>
<span class="t" style="left:40px;top:420px;letter-spacing:-0.022px">1005 - Write reports and letters to clients and council</span>
<div style="left:671px;top:418px;width:22px;height:17px;background:#f4f4f4"></div>
<span class="t" style="left:697.6px;top:420px;letter-spacing:-0.1px">21 09 2015</span>
<span class="t" style="left:811px;top:420px;letter-spacing:-0.1px">23 09 2015</span>
<span class="t r" style="right:347px;top:420px;">20</span>
<span class="t r" style="right:302px;top:420px;">11</span>
<span class="t r" style="right:272px;top:420px;">60%</span>
<div style="left:1052px;top:420px;width:13px;height:13px;border:1px solid #666;box-sizing:border-box;background:#fff"></div>
<div style="left:1074px;top:417px;width:56px;height:19px;border:1px solid #000;box-sizing:border-box;background:#fff"></div>
<span class="t" style="left:1081.5px;top:421px;letter-spacing:-0.12px">Register</span>
<div style="left:1130px;top:418px;width:67px;height:17px;background:#f4f4f4"></div>
<span class="t" style="left:1131px;top:420px;color:#858585">1005</span>
<span class="t" style="left:1250px;top:420px;color:#a8242e;letter-spacing:0.25px">Sched</span>
<div style="left:10px;top:435px;width:19px;height:19px;border:1px solid #000;border-left:0;box-sizing:border-box;background:#e8eaee;box-shadow:inset 0 1px #fff,inset 0 -1px #fff"></div>
<div style="left:33px;top:436px;width:574px;height:17px;background:#f4f4f4"></div>
<span class="t" style="left:40px;top:438px;letter-spacing:-0.083px">1006 - Perform site visit and investigation</span>
<div style="left:671px;top:436px;width:22px;height:17px;background:#f4f4f4"></div>
<span class="t" style="left:697.6px;top:438px;letter-spacing:-0.1px">24 09 2015</span>
<span class="t" style="left:811px;top:438px;letter-spacing:-0.1px">30 09 2015</span>
<span class="t r" style="right:347px;top:438px;">25</span>
<span class="t r" style="right:302px;top:438px;">20</span>
<span class="t r" style="right:272px;top:438px;">90%</span>
<div style="left:1052px;top:438px;width:13px;height:13px;border:1px solid #666;box-sizing:border-box;background:#fff"></div>
<div style="left:1074px;top:435px;width:56px;height:19px;border:1px solid #000;box-sizing:border-box;background:#fff"></div>
<span class="t" style="left:1081.5px;top:439px;letter-spacing:-0.12px">Register</span>
<div style="left:1130px;top:436px;width:67px;height:17px;background:#f4f4f4"></div>
<span class="t" style="left:1131px;top:438px;color:#858585">1006</span>
<span class="t" style="left:1250px;top:438px;color:#a8242e;letter-spacing:0.25px">Sched</span>
<div style="left:695px;top:147px;width:349px;height:1px;background:#cacada"></div>
<div style="left:695px;top:165px;width:349px;height:1px;background:#cacada"></div>
<div style="left:695px;top:183px;width:349px;height:1px;background:#cacada"></div>
<div style="left:695px;top:201px;width:349px;height:1px;background:#cacada"></div>
<div style="left:695px;top:219px;width:349px;height:1px;background:#cacada"></div>
<div style="left:695px;top:237px;width:349px;height:1px;background:#cacada"></div>
<div style="left:695px;top:255px;width:349px;height:1px;background:#cacada"></div>
<div style="left:695px;top:273px;width:349px;height:1px;background:#cacada"></div>
<div style="left:695px;top:291px;width:349px;height:1px;background:#cacada"></div>
<div style="left:695px;top:309px;width:349px;height:1px;background:#cacada"></div>
<div style="left:695px;top:327px;width:349px;height:1px;background:#cacada"></div>
<div style="left:695px;top:345px;width:349px;height:1px;background:#cacada"></div>
<div style="left:695px;top:363px;width:349px;height:1px;background:#cacada"></div>
<div style="left:695px;top:381px;width:349px;height:1px;background:#cacada"></div>
<div style="left:695px;top:399px;width:349px;height:1px;background:#cacada"></div>
<div style="left:695px;top:417px;width:349px;height:1px;background:#cacada"></div>
<div style="left:695px;top:435px;width:349px;height:1px;background:#cacada"></div>
<div style="left:695px;top:453px;width:349px;height:1px;background:#cacada"></div>
<div style="left:695px;top:147px;width:1px;height:307px;background:#bebee0"></div>
<div style="left:752px;top:147px;width:1px;height:307px;background:#bebee0"></div>
<div style="left:809px;top:147px;width:1px;height:307px;background:#bebee0"></div>
<div style="left:866px;top:147px;width:1px;height:307px;background:#bebee0"></div>
<div style="left:923px;top:147px;width:1px;height:307px;background:#bebee0"></div>
<div style="left:968px;top:147px;width:1px;height:307px;background:#bebee0"></div>
<div style="left:1013px;top:147px;width:1px;height:307px;background:#bebee0"></div>
<div style="left:1043px;top:147px;width:1px;height:307px;background:#bebee0"></div>
<svg style="left:18px;top:150px" width="7" height="12" viewBox="0 0 7 12"><path d="M0 0L6.5 6L0 12z" fill="#000"/></svg>
<span class="t12" style="left:572px;top:752px;color:#363676;letter-spacing:0.3px">Fill from:</span>
<div style="left:621px;top:748px;width:131px;height:23px;border:1px solid #000;border-width:1.5px;box-sizing:border-box;background:#fff"></div>
<span class="t12" style="left:653.5px;top:754px;letter-spacing:0.2px">another Job</span>
<div style="left:1027px;top:748px;width:261px;height:23px;border:1.5px solid #000;box-sizing:border-box;background:#fff"></div>
<div style="left:1157px;top:748px;width:1px;height:23px;background:#000"></div>
<span class="t12" style="left:1058.5px;top:754px;letter-spacing:0.4px">Show Detail</span>
<span class="t12" style="left:1205px;top:754px;letter-spacing:0.6px"><u>C</u>lose</span>
</body></html>
